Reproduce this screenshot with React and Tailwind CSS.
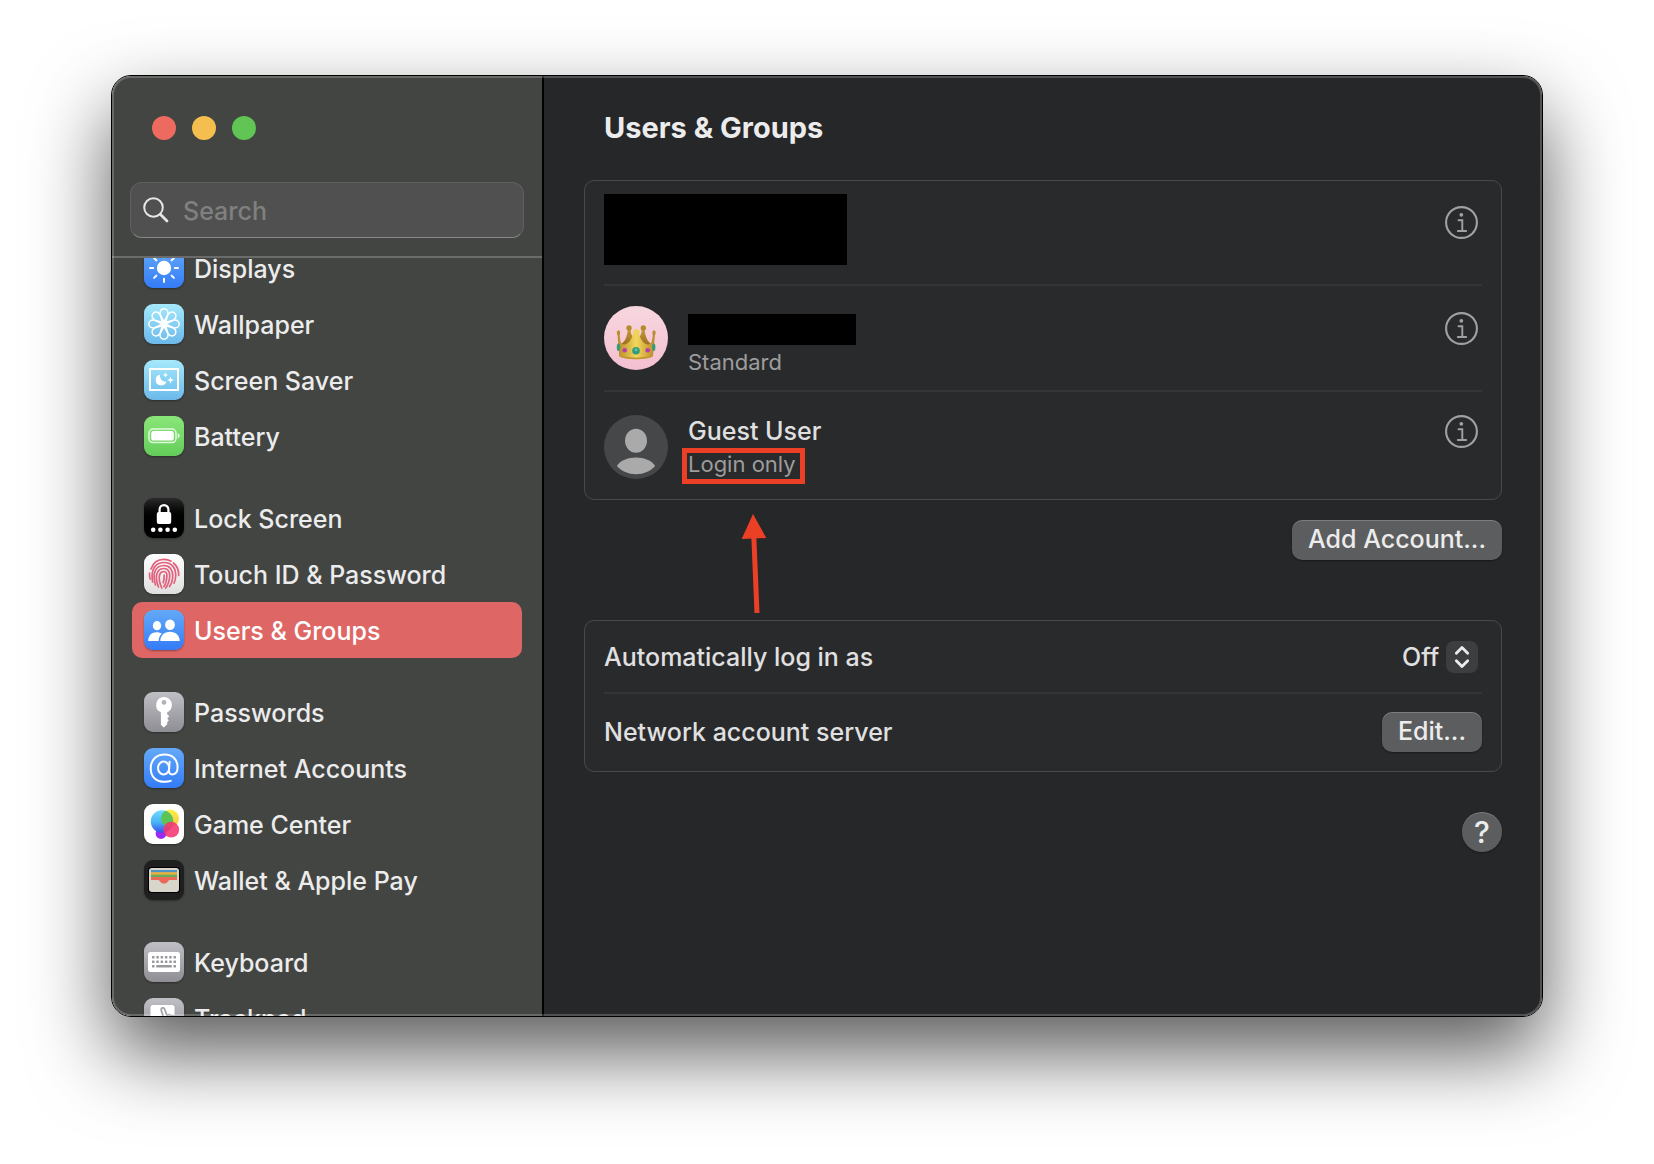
import React from 'react';

function Tile({ className, children }) {
  return (
    <span className={`size-10 shrink-0 overflow-hidden rounded-[9px] shadow-[0_1px_2px_rgba(0,0,0,0.35)] ${className}`}>
      <svg viewBox="0 0 40 40" className="size-10" aria-hidden="true">
        {children}
      </svg>
    </span>
  );
}

const BLUE = 'bg-linear-to-b from-[#64a9f8] to-[#347bf7]';
const SKY = 'bg-linear-to-b from-[#a5e9fb] to-[#6bb9ea]';
const GRAY = 'bg-linear-to-b from-[#c0bfc5] to-[#8f8e94]';
const ANGLES = [0, 45, 90, 135, 180, 225, 270, 315];

const icons = {
  displays: (
    <Tile className={BLUE}>
      <circle cx="20" cy="20" r="7.2" fill="#fff" />
      {ANGLES.map((a) => (
        <path key={a} d="M20 6v3.2" stroke="#fff" strokeWidth="2" strokeLinecap="round" transform={`rotate(${a} 20 20)`} />
      ))}
    </Tile>
  ),
  wallpaper: (
    <Tile className={SKY}>
      <g fill="none" stroke="#fff" strokeWidth="1.5">
        {ANGLES.map((a) => (
          <path
            key={a}
            d="M20 22.500C18.500 18 16 12 16 9a4 4.200 0 0 1 8 0C24 12 21.500 18 20 22.500Z"
            transform={`rotate(${a} 20 20)`}
          />
        ))}
      </g>
    </Tile>
  ),
  screensaver: (
    <Tile className={SKY}>
      <rect x="6" y="9" width="28" height="21" fill="none" stroke="#fff" strokeWidth="2" />
      <path d="M16.2 14.5A5.5 5.5 0 1 0 22.4 21.6A5.6 5.6 0 0 1 16.2 14.5Z" fill="#fff" />
      <path d="M21.5 12.2l.7 2.1 2.1.7-2.1.7-.7 2.1-.7-2.1-2.1-.7 2.1-.7zM26.5 16.4l1 2.8 2.6.9-2.6.9-1 2.8-1-2.8-2.6-.9 2.6-.9z" fill="#fff" />
    </Tile>
  ),
  battery: (
    <Tile className="bg-linear-to-b from-[#8ae678] to-[#63cd5a]">
      <rect x="5" y="13" width="27" height="13.6" rx="4" fill="none" stroke="#fff" strokeOpacity="0.8" strokeWidth="1.5" />
      <rect x="7.2" y="15" width="22.6" height="9.6" rx="2.2" fill="#fff" />
      <path d="M33.7 17.3v5c1.2-.3 2-1.300 2-2.500s-.8-2.200-2-2.500z" fill="#fff" fillOpacity="0.8" />
    </Tile>
  ),
  lock: (
    <Tile className="bg-linear-to-b from-[#2b2b2b] to-black to-60%">
      <path d="M15.600 15V11.500a4.400 4.400 0 0 1 8.800 0V15" fill="none" stroke="#fff" strokeWidth="2.200" />
      <rect x="12.800" y="14" width="14.400" height="12" rx="2" fill="#fff" />
      <g fill="#fff">
        <circle cx="9.200" cy="31.700" r="2.300" />
        <circle cx="16.400" cy="31.700" r="2.300" />
        <circle cx="23.600" cy="31.700" r="2.300" />
        <circle cx="30.800" cy="31.700" r="2.300" />
      </g>
    </Tile>
  ),
  touchid: (
    <Tile className="bg-linear-to-b from-white to-[#dfdfdf]">
      <g fill="none" stroke="#e2607c" strokeWidth="1.700" strokeLinecap="round">
        <path d="M7 15C9 9 14 5.400 20 5.400c2.600 0 5 .6 7 1.800" />
        <path d="M29.500 9c3.500 3 5.400 7 5.200 12.500" />
        <path d="M5.600 19c-.3 2.500 0 4.500.6 6" />
        <path d="M8.600 28c-1.500-9 0-19.300 11.400-19.500 8.500 0 12 6.500 11.700 13.500-.1 2.800-.7 5-1.700 7" />
        <path d="M11.500 31c-1.700-5.500-2-10-.4-14 1.500-3.500 5-5.500 8.900-5.500 5.800 0 8.900 4.500 8.700 10.500-.1 4.300-1.300 8-3.200 10.600" />
        <path d="M14.500 33c-2-5-2.900-10-1.300-14 1.100-2.800 3.600-4.500 6.800-4.500 3.700 0 5.900 3 5.700 7.500-.2 4.800-1.700 9-4 12" />
        <path d="M17.800 34c-2-4.500-3.200-9.500-2.200-13.200.6-2.100 2.200-3.300 4.400-3.300 2.100 0 3 1.800 2.900 4.500-.1 4.200-1.100 7.800-2.900 10.500" />
        <path d="M20.200 21c.1 3-.2 5.500-1 7.600" />
      </g>
    </Tile>
  ),
  users: (
    <Tile className={BLUE}>
      <g fill="#fff">
        <ellipse cx="13" cy="15.700" rx="4.200" ry="4.600" />
        <path d="M4.200 31c0-5.400 3.400-8.800 8.500-8.800 2 0 3.700.5 5.100 1.500-2.300 1.900-3 4.200-3.100 7.300z" />
        <ellipse cx="26" cy="14.700" rx="4.900" ry="5.300" />
        <path d="M16.300 31c0-5.500 3.900-9.300 9.700-9.300s9.700 3.800 9.700 9.300z" />
      </g>
    </Tile>
  ),
  passwords: (
    <Tile className={GRAY}>
      <path
        fill="#fff"
        fillRule="evenodd"
        d="M20 5a8 8 0 0 1 3.200 15.300v1.900l2.100 2.100-2.100 2.200 1.600 1.800-1.600 2v2l-3.400 3.200-2.900-2.800V20.300A8 8 0 0 1 20 5zm0 3a2.400 2.400 0 1 0 0 4.800 2.400 2.400 0 0 0 0-4.800z"
      />
    </Tile>
  ),
  internet: (
    <Tile className={BLUE}>
      <g fill="none" stroke="#fff" strokeWidth="2" strokeLinecap="round">
        <ellipse cx="19.600" cy="20" rx="5.600" ry="6.400" />
        <path d="M25.600 13.800l-.6 8.400c-.2 2.700 1.100 4.200 3.300 4.200 3.300 0 5.300-3 5.300-7.400C33.600 11.500 28.500 6.600 20.800 6.600 12.300 6.600 6.700 12 6.700 20.200c0 8.500 5.400 13.600 14 13.600 2.500 0 4.500-.3 6-.9" />
      </g>
    </Tile>
  ),
  game: (
    <Tile className="bg-white">
      <defs>
        <linearGradient id="gcBlue" x1="0" y1="0" x2="0" y2="1">
          <stop offset="0" stopColor="#6fdcfb" />
          <stop offset="0.550" stopColor="#46b2f4" />
          <stop offset="1" stopColor="#3a4df0" />
        </linearGradient>
        <linearGradient id="gcYellow" x1="0" y1="0" x2="0" y2="1">
          <stop offset="0" stopColor="#fdf046" />
          <stop offset="1" stopColor="#fdc23f" />
        </linearGradient>
        <clipPath id="gcClip">
          <circle cx="18" cy="17.500" r="11.200" />
        </clipPath>
      </defs>
      <circle cx="17" cy="29.500" r="5.400" fill="#9a2bf0" />
      <circle cx="26" cy="14.500" r="9" fill="url(#gcYellow)" />
      <circle cx="18" cy="17.500" r="11.200" fill="url(#gcBlue)" />
      <circle cx="26" cy="14.500" r="9" fill="#5cc455" clipPath="url(#gcClip)" />
      <circle cx="27.200" cy="25.700" r="7.900" fill="#f6356f" fillOpacity="0.880" />
    </Tile>
  ),
  wallet: (
    <Tile className="bg-[#1f1f20]">
      <rect x="4" y="7" width="32" height="26" rx="3.500" fill="#000" />
      <rect x="5" y="8" width="30" height="24" rx="3" fill="#d8d5cb" />
      <rect x="7" y="10" width="26" height="3" fill="#4f93c5" />
      <rect x="7" y="12.200" width="26" height="3" fill="#f0b13e" />
      <rect x="7" y="14.600" width="26" height="3" fill="#67ad5b" />
      <path d="M7 17h26v3h-7.300c-1.500 0-1.900 3.600-5.700 3.600s-4.200-3.600-5.700-3.600H7z" fill="#ea6a5a" />
    </Tile>
  ),
  keyboard: (
    <Tile className={GRAY}>
      <rect x="4" y="10" width="32" height="20" rx="2.500" fill="#fff" />
      <g fill="#99989e">
        {[8, 12.300, 16.600, 20.900, 25.200, 29.500].map((x) => (
          <React.Fragment key={x}>
            <rect x={x} y="14" width="2.500" height="2.500" rx="0.500" />
            <rect x={x} y="18.500" width="2.500" height="2.500" rx="0.500" />
          </React.Fragment>
        ))}
        <rect x="8" y="23" width="2.500" height="2.500" rx="0.500" />
        <rect x="12.300" y="23" width="15.400" height="2.500" rx="0.500" />
        <rect x="29.500" y="23" width="2.500" height="2.500" rx="0.500" />
      </g>
    </Tile>
  ),
  trackpad: (
    <Tile className={GRAY}>
      <rect x="6.500" y="7" width="24" height="24" rx="2.500" fill="#fff" />
      <path
        d="M22 27l-4.700-14.500c-.6-3 2.700-3.600 3.500-1l2.200 6c2-1.500 3.300-.8 4 .6 1.800-1 3-.4 3.600 1 2-.8 3.500.2 4 2l2 7z"
        fill="#fff"
        stroke="#a3a2a8"
        strokeWidth="1.800"
      />
    </Tile>
  ),
};

const groups = [
  [
    ['displays', 'Displays'],
    ['wallpaper', 'Wallpaper'],
    ['screensaver', 'Screen Saver'],
    ['battery', 'Battery'],
  ],
  [
    ['lock', 'Lock Screen'],
    ['touchid', 'Touch ID & Password'],
    ['users', 'Users & Groups'],
  ],
  [
    ['passwords', 'Passwords'],
    ['internet', 'Internet Accounts'],
    ['game', 'Game Center'],
    ['wallet', 'Wallet & Apple Pay'],
  ],
  [
    ['keyboard', 'Keyboard'],
    ['trackpad', 'Trackpad'],
  ],
];

function Sidebar() {
  return (
    <aside className="flex w-[432px] shrink-0 flex-col border-r-2 border-black bg-[#434543]">
      <div className="flex gap-4 pt-10 pl-10">
        <button aria-label="Close" className="size-6 rounded-full bg-[#ed6a5f]" />
        <button aria-label="Minimize" className="size-6 rounded-full bg-[#f5bf4f]" />
        <button aria-label="Zoom" className="size-6 rounded-full bg-[#61c555]" />
      </div>
      <label className="mx-[18px] mt-[42px] mb-[18px] flex h-14 shrink-0 items-center gap-3.5 rounded-xl border border-[#5f605f] border-b-[#868786] bg-[#4f504f] pl-3">
        <svg viewBox="0 0 26 26" className="size-[26px] shrink-0" fill="none" stroke="#e6e6e6" strokeLinecap="round" aria-hidden="true">
          <circle cx="10.500" cy="10.500" r="9.300" strokeWidth="2" />
          <path d="M17.500 17.500l6.500 6.500" strokeWidth="2.800" />
        </svg>
        <input
          type="text"
          aria-label="Search"
          placeholder="Search"
          className="w-full min-w-0 bg-transparent pt-0.5 text-[25px] text-white outline-none placeholder:text-[#7f807f]"
        />
      </label>
      <nav className="min-h-0 flex-1 overflow-hidden border-t-2 border-[#6a6b6a]">
        <div className="-mt-[18px] flex flex-col gap-[26px] px-5">
          {groups.map((group) => (
            <ul key={group[0][0]}>
              {group.map(([id, label]) => (
                <li key={id}>
                  <a
                    href={`#${id}`}
                    className={`flex h-14 items-center gap-2.5 rounded-[10px] pl-3 ${
                      id === 'users' ? 'bg-[#de6765] text-white' : 'text-[#ececec]'
                    }`}
                  >
                    {icons[id]}
                    <span className="pt-0.5 whitespace-nowrap">{label}</span>
                  </a>
                </li>
              ))}
            </ul>
          ))}
        </div>
      </nav>
    </aside>
  );
}

function InfoButton({ label, className }) {
  return (
    <button aria-label={label} className={`mr-1 ml-auto shrink-0 ${className}`}>
      <svg viewBox="0 0 33 33" className="size-[33px]" fill="none" stroke="#a0a1a1" aria-hidden="true">
        <circle cx="16.500" cy="16.500" r="15.400" strokeWidth="2.100" />
        <circle cx="16.300" cy="8.800" r="1.900" fill="#a0a1a1" stroke="none" />
        <path d="M13.500 14.200h3.800v10.500M12.800 25h8.400" strokeWidth="1.900" strokeLinecap="round" />
      </svg>
    </button>
  );
}

function CrownAvatar() {
  return (
    <svg viewBox="0 0 64 64" className="size-16 shrink-0 rounded-full" aria-hidden="true">
      <defs>
        <linearGradient id="pinkBg" x1="0" y1="0" x2="0" y2="1">
          <stop offset="0" stopColor="#f8d7df" />
          <stop offset="1" stopColor="#f3bfd0" />
        </linearGradient>
        <linearGradient id="gold" x1="0" y1="0" x2="1" y2="0">
          <stop offset="0" stopColor="#b78a2a" />
          <stop offset="0.500" stopColor="#f3d75c" />
          <stop offset="1" stopColor="#b9872b" />
        </linearGradient>
        <linearGradient id="goldDark" x1="0" y1="0" x2="0" y2="1">
          <stop offset="0" stopColor="#c79c35" />
          <stop offset="1" stopColor="#8d5f1c" />
        </linearGradient>
      </defs>
      <rect width="64" height="64" fill="url(#pinkBg)" />
      <path d="M16 44l1-6c4-2 6.500-8 6.800-15h2.600c.5 6 2.600 10 5.600 12 3-2 5.400-6 6-12h2.600c.4 7 3 13 6.800 15l1 6z" fill="url(#goldDark)" />
      <circle cx="25" cy="22" r="2.700" fill="#b58b2e" />
      <circle cx="39.300" cy="22" r="2.700" fill="#b58b2e" />
      <path d="M13.500 28l1.700 22c5 4.200 29 4.200 33.800 0l2-22h-2.200c-.4 5.500-1.100 9.500-3.300 10.300-5.300 1-8.700-3.800-10.700-11.300h-5.400c-2 7.500-5.800 12.300-10.600 11.300-2.200-.8-2.900-4.800-3.100-10.300z" fill="url(#gold)" />
      <path d="M15.200 48.500c5 4 28.600 4 33.800 0v1.800c-5 3.900-29 3.900-33.800 0z" fill="#c4962f" />
      <circle cx="32.300" cy="26.300" r="3.200" fill="#f0d458" />
      <ellipse cx="14.500" cy="26.800" rx="1.700" ry="2.500" fill="#b88e32" />
      <ellipse cx="50" cy="26.800" rx="1.700" ry="2.500" fill="#b88e32" />
      <circle cx="32" cy="44.700" r="3.800" fill="#2f9c7c" />
      <circle cx="32" cy="43.700" r="1.500" fill="#5fc4a4" />
      <circle cx="20.700" cy="44.200" r="2.300" fill="#b93cab" />
      <circle cx="43.700" cy="44.200" r="2.300" fill="#b93cab" />
      <ellipse cx="14.400" cy="41.300" rx="1.600" ry="3.700" fill="#2f9c7c" />
      <ellipse cx="49.800" cy="41.300" rx="1.600" ry="3.700" fill="#2f9c7c" />
    </svg>
  );
}

function GuestAvatar() {
  return (
    <svg viewBox="0 0 64 64" className="size-16 shrink-0 rounded-full bg-[#464749]" fill="#aaaaab" aria-hidden="true">
      <ellipse cx="32" cy="25.700" rx="11" ry="12" />
      <path d="M12.800 51C16.500 45.600 23.600 42.600 32 42.600S47.500 45.600 51.200 51C46.500 56.300 39.500 59.200 32 59.200S17.500 56.300 12.800 51Z" />
    </svg>
  );
}

function PushButton({ children }) {
  return (
    <button className="flex h-10 shrink-0 items-center rounded-[10px] bg-[#5c5d5e] px-4 text-[#ececec] shadow-[inset_0_1px_0_rgba(255,255,255,0.2),0_1px_2px_rgba(0,0,0,0.4)]">
      <span className="pb-0.5 whitespace-nowrap">{children}</span>
    </button>
  );
}

export default function App() {
  return (
    <div className="flex h-screen bg-white px-[111px] pt-[75px] pb-[147px] font-['Inter',sans-serif] text-[25px] leading-8 font-medium text-[#e0e0e0]">
      <div className="relative flex min-w-0 flex-1 overflow-hidden rounded-[20px] border border-black shadow-[0_36px_80px_rgba(0,0,0,0.65)]">
        <Sidebar />
        <main className="min-w-0 flex-1 bg-[#262729] px-10 pt-8">
          <h1 className="pl-5 text-[29px] leading-10 font-bold text-[#ececec]">Users &amp; Groups</h1>

          <section className="mt-8 rounded-[10px] border border-[#48494b] bg-[#292a2c] px-[19px]">
            <div className="flex items-start border-b-2 border-[#343537] pt-[13px] pb-[19px]">
              <div className="h-[71px] w-[243px] bg-black" />
              <InfoButton label="Account details" className="mt-3" />
            </div>
            <div className="flex items-start gap-5 border-b-2 border-[#343537] pt-5 pb-4">
              <CrownAvatar />
              <div>
                <div className="mt-2 h-[31px] w-[168px] bg-black" />
                <p className="mt-[5px] text-[22px] leading-6 font-normal text-[#9c9d9d]">Standard</p>
              </div>
              <InfoButton label="Standard account details" className="mt-1.5" />
            </div>
            <div className="flex items-start gap-5 pt-[23px] pb-5">
              <GuestAvatar />
              <div>
                <p>Guest User</p>
                <p className="relative mt-[5px] w-fit text-[22px] leading-6 font-normal whitespace-nowrap text-[#9c9d9d]">
                  Login only
                  <span className="absolute -top-1 -right-[9px] -bottom-2 -left-1.5 border-[5px] border-[#eb4026]" />
                  <svg viewBox="0 0 26 100" className="absolute top-[62px] left-[53px] h-[100px] w-[26px]" aria-hidden="true">
                    <path d="M12 0l13.300 24L.7 25z" fill="#eb4026" />
                    <path d="M12.800 22l3.200 77" stroke="#eb4026" strokeWidth="5" />
                  </svg>
                </p>
              </div>
              <InfoButton label="Guest User details" className="" />
            </div>
          </section>

          <div className="mt-5 flex justify-end">
            <PushButton>Add Account...</PushButton>
          </div>

          <section className="mt-[60px] rounded-[10px] border border-[#48494b] bg-[#292a2c] px-[19px]">
            <div className="flex h-[73px] items-center justify-between border-b-2 border-[#343537]">
              <label htmlFor="autologin">Automatically log in as</label>
              <div className="relative mr-1 flex items-center">
                <select
                  id="autologin"
                  className="h-8 appearance-none bg-transparent pr-[38px] leading-8 outline-none"
                >
                  <option>Off</option>
                </select>
                <span className="pointer-events-none absolute right-0 size-8 rounded-lg bg-[#3d3e40]">
                  <svg viewBox="0 0 32 32" className="size-8" fill="none" stroke="#ececec" strokeWidth="2.800" strokeLinecap="round" strokeLinejoin="round" aria-hidden="true">
                    <path d="M10.300 12.300L16 6.500l5.700 5.800M10.300 19.700L16 25.500l5.700-5.800" />
                  </svg>
                </span>
              </div>
            </div>
            <div className="flex h-[77px] items-center justify-between pb-0.5">
              <span>Network account server</span>
              <PushButton>Edit...</PushButton>
            </div>
          </section>

          <div className="mt-10 flex justify-end">
            <button
              aria-label="Help"
              className="size-10 rounded-full bg-[#5c5d5e] text-[30px] leading-10 text-[#ececec] shadow-[inset_0_1px_0_rgba(255,255,255,0.2),0_1px_2px_rgba(0,0,0,0.4)]"
            >
              ?
            </button>
          </div>
        </main>
        <span className="pointer-events-none absolute inset-0 rounded-[19px] border-2 border-white/20" />
      </div>
    </div>
  );
}
